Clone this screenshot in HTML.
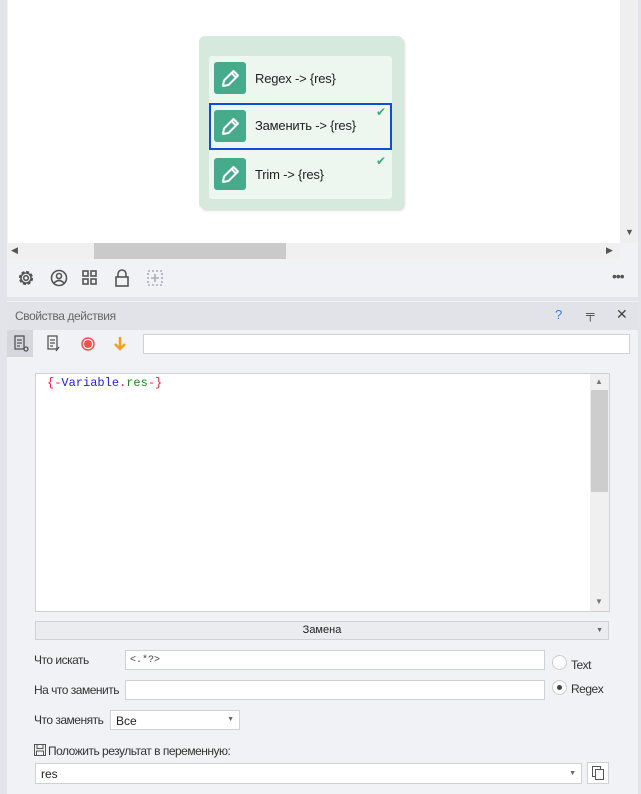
<!DOCTYPE html>
<html><head><meta charset="utf-8"><style>
*{margin:0;padding:0;box-sizing:border-box}
body{width:641px;height:794px;background:#e3e4e9;position:relative;overflow:hidden;font-family:"Liberation Sans",sans-serif;font-size:12px;color:#222}
.a{position:absolute}
.inp{position:absolute;background:#fff;border:1px solid #cfd1d6}
.node{position:absolute;left:209px;width:183px;height:45px;background:#eef6f0;}
.ic{position:absolute;left:5px;top:6px;width:32px;height:32px;background:#45ab8a;border-radius:3px}
.nt{position:absolute;left:46px;top:15px;font-size:13px;color:#222;letter-spacing:-0.2px}
.ck{position:absolute;right:6px;top:2px;color:#3aaa80;font-size:12px}
.lbl{position:absolute;font-size:12px;color:#333;letter-spacing:-0.5px}
</style></head><body>
<div class="a" style="left:7px;top:0;width:631px;height:297px;background:#f1f2f6"></div>
<div class="a" style="left:8px;top:0;width:612px;height:243px;background:#fff"></div>
<div class="a" style="left:620px;top:0;width:17px;height:243px;background:#efefef"></div>
<div class="a" style="left:625px;top:227px;font-size:9px;color:#555">▼</div>
<div class="a" style="left:8px;top:243px;width:612px;height:16px;background:#f0f0f0"></div>
<div class="a" style="left:94px;top:243px;width:192px;height:16px;background:#cacaca"></div>
<div class="a" style="left:11px;top:245px;font-size:9px;color:#555">◀</div>
<div class="a" style="left:606px;top:245px;font-size:9px;color:#555">▶</div>
<div class="a" style="left:199px;top:36px;width:204px;height:173px;background:#d5eadc;border-radius:6px;box-shadow:2px 2px 2px #ddd"></div>
<div class="a" style="left:209px;top:56px;width:183px;height:143px;background:#eef6f0;border-radius:3px"></div>
<svg width="0" height="0" style="position:absolute"><defs><symbol id="pen" viewBox="0 0 32 32"><path d="M9 24 L10 18.5 L19.5 9 L24 13.5 L14.5 23 Z M17.5 11 L22 15.5" fill="none" stroke="#fff" stroke-width="2" stroke-linejoin="round"/></symbol></defs></svg>
<div class="node" style="top:56px;background:transparent"><div class="ic"><svg width="32" height="32"><use href="#pen"/></svg></div><div class="nt">Regex -&gt; {res}</div></div>
<div class="node" style="top:103px;height:47px;border:2px solid #0a4fd6;background:transparent"><div class="ic" style="left:3px;top:5px"><svg width="32" height="32"><use href="#pen"/></svg></div><div class="nt" style="left:44px;top:13px">Заменить -&gt; {res}</div><div class="ck" style="right:4px;top:0px">✔</div></div>
<div class="node" style="top:152px;background:transparent"><div class="ic"><svg width="32" height="32"><use href="#pen"/></svg></div><div class="nt">Trim -&gt; {res}</div><div class="ck">✔</div></div>
<svg class="a" style="left:16px;top:268px" width="160" height="20" fill="none" stroke="#555" stroke-width="1.6">
<circle cx="10" cy="10" r="6" stroke-dasharray="3 1.7" stroke-width="2.2"/><circle cx="10" cy="10" r="5"/><circle cx="10" cy="10" r="2.3"/>
<circle cx="43" cy="10" r="7.5"/><circle cx="43" cy="8" r="2.5"/><path d="M38 15 Q43 10 48 15"/>
<rect x="67" y="3" width="5" height="5"/><rect x="75" y="3" width="5" height="5"/><rect x="67" y="11" width="5" height="5"/><rect x="75" y="11" width="5" height="5"/>
<rect x="100" y="9" width="12" height="9"/><path d="M102 9 V6 a4 4 0 0 1 8 0 V9"/>
<rect x="132" y="3" width="14" height="14" stroke="#aab" stroke-dasharray="2 2"/><path d="M139 6v8M135 10h8" stroke="#aab"/>
</svg>
<div class="a" style="left:612px;top:268px;font-size:14px;color:#555;letter-spacing:-1px">•••</div>
<div class="a" style="left:7px;top:301px;width:631px;height:493px;background:#f1f2f6"></div>
<div class="a" style="left:7px;top:302px;width:631px;height:28px;background:#e2e3e8"></div>
<div class="a" style="left:15px;top:309px;font-size:12px;color:#666;letter-spacing:-0.4px">Свойства действия</div>
<div class="a" style="left:555px;top:307px;font-size:13px;color:#3a7de0">?</div>
<div class="a" style="left:586px;top:307px;font-size:12px;color:#444">╤</div>
<div class="a" style="left:616px;top:306px;font-size:14px;color:#444">✕</div>
<div class="a" style="left:7px;top:330px;width:26px;height:27px;background:#d5d7dd"></div>
<svg class="a" style="left:13px;top:334px" width="120" height="20" fill="none" stroke="#555" stroke-width="1.3">
<rect x="2" y="2" width="9" height="13"/><path d="M4 6h5M4 9h5M4 12h3"/><circle cx="13" cy="15" r="2"/>
<rect x="35" y="2" width="9" height="13"/><path d="M37 6h5M37 9h5M37 12h3M43 17l3-4"/>
<circle cx="75" cy="10" r="6" stroke="#f05050" stroke-width="1.5"/><circle cx="75" cy="10" r="4" fill="#f05050" stroke="none"/>
<path d="M107 3v12M102 10l5 5 5-5" stroke="#f0a020" stroke-width="2.5"/>
</svg>
<div class="inp" style="left:143px;top:334px;width:487px;height:20px"></div>
<div class="inp" style="left:35px;top:373px;width:575px;height:239px"></div>
<div class="a" style="left:590px;top:374px;width:19px;height:237px;background:#f0f0f0"></div>
<div class="a" style="left:591px;top:390px;width:17px;height:102px;background:#cdcdcd"></div>
<div class="a" style="left:595px;top:377px;font-size:8px;color:#777">▲</div>
<div class="a" style="left:595px;top:597px;font-size:8px;color:#777">▼</div>
<div class="a" style="left:47px;top:376px;font-family:'Liberation Mono',monospace;font-size:12px"><span style="color:#e0203a">{-</span><span style="color:#2020e0">Variable</span><span style="color:#e0203a">.</span><span style="color:#208020">res</span><span style="color:#e0203a">-}</span></div>
<div class="a" style="left:35px;top:621px;width:574px;height:19px;background:#ebecf0;border:1px solid #cfd1d6;text-align:center;font-size:11px;line-height:17px">Замена<span style="position:absolute;right:5px;font-size:7px;color:#666">▼</span></div>
<div class="lbl" style="left:34px;top:653px">Что искать</div>
<div class="inp" style="left:125px;top:650px;width:420px;height:20px;font-family:'Liberation Mono',monospace;font-size:10px;padding:4px 4px;color:#444">&lt;.*?&gt;</div>
<div class="lbl" style="left:34px;top:683px">На что заменить</div>
<div class="inp" style="left:125px;top:680px;width:420px;height:20px"></div>
<div class="a" style="left:552px;top:655px;width:15px;height:15px;border-radius:50%;background:#fff;border:1px solid #ccc"></div>
<div class="lbl" style="left:571px;top:658px">Text</div>
<div class="a" style="left:552px;top:680px;width:15px;height:15px;border-radius:50%;background:#fff;border:1px solid #ccc"></div>
<div class="a" style="left:557px;top:685px;width:5px;height:5px;border-radius:50%;background:#444"></div>
<div class="lbl" style="left:571px;top:682px">Regex</div>
<div class="lbl" style="left:34px;top:713px">Что заменять</div>
<div class="inp" style="left:110px;top:710px;width:130px;height:20px;font-size:12px;padding:3px 5px">Все<span style="position:absolute;right:5px;top:5px;font-size:7px;color:#666">▼</span></div>
<svg class="a" style="left:34px;top:744px" width="12" height="12" fill="none" stroke="#555"><rect x="0.5" y="0.5" width="11" height="11"/><rect x="3" y="0.5" width="6" height="4"/><rect x="2.5" y="7" width="7" height="4.5"/></svg>
<div class="lbl" style="left:48px;top:744px">Положить результат в переменную:</div>
<div class="inp" style="left:35px;top:763px;width:547px;height:21px;font-size:12px;padding:3px 5px">res<span style="position:absolute;right:5px;top:6px;font-size:7px;color:#666">▼</span></div>
<div class="inp" style="left:587px;top:762px;width:22px;height:22px"></div>
<svg class="a" style="left:591px;top:765px" width="14" height="16" fill="none" stroke="#555"><rect x="1.5" y="1.5" width="8" height="10"/><rect x="4.5" y="4.5" width="8" height="10" fill="#fff"/></svg>
</body></html>
